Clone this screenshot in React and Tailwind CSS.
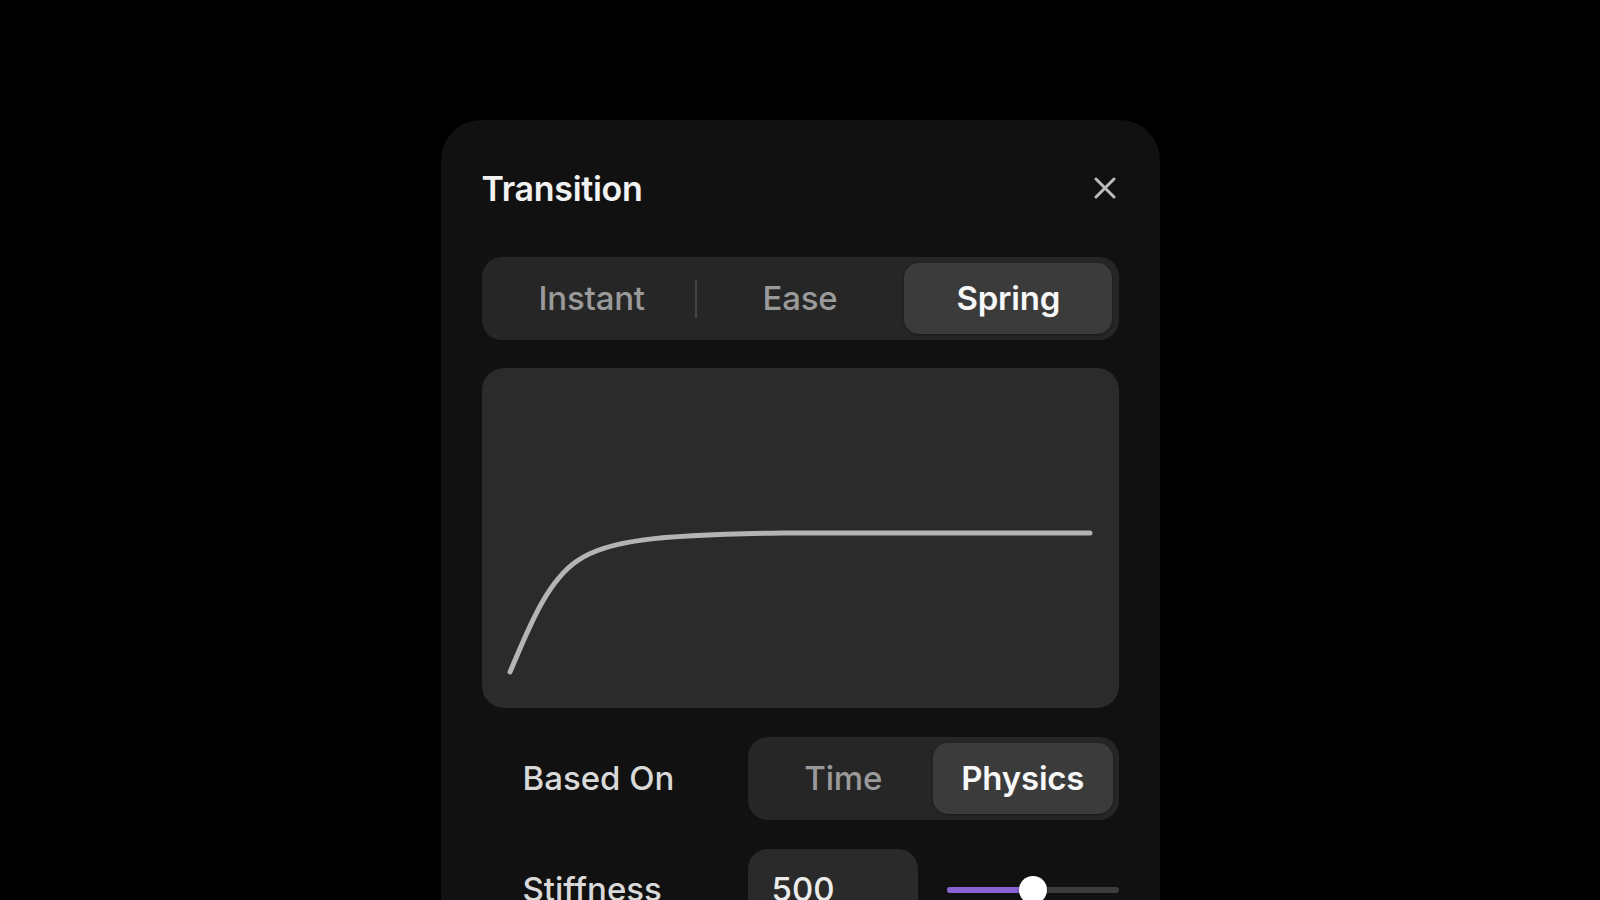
import React, { useState } from 'react';

const font = { fontFamily: 'Inter, "Noto Sans", sans-serif' };

function Segmented({ options, value, onChange, dividers = false, className = '' }) {
  return (
    <div className={`flex h-[83px] items-stretch rounded-[20px] bg-[#262626] p-[6px] ${className}`}>
      {options.map((opt, i) => {
        const active = opt === value;
        const prevActive = options[i - 1] === value;
        return (
          <React.Fragment key={opt}>
            {dividers && i > 0 && (
              <div className="flex w-0 shrink-0 items-center">
                <div
                  className={`h-[38px] w-[2px] shrink-0 -translate-x-[1px] ${
                    active || prevActive ? 'bg-transparent' : 'bg-[#444444]'
                  }`}
                />
              </div>
            )}
            <button
              type="button"
              onClick={() => onChange(opt)}
              className={`flex flex-1 items-center justify-center rounded-[15px] text-[33px] tracking-[-0.2px] ${
                active
                  ? 'bg-[#3b3b3b] font-semibold text-[#f7f7f7] shadow-[0_1px_3px_rgba(0,0,0,0.35)]'
                  : 'font-medium text-[#9a9a9a]'
              }`}
            >
              {opt}
            </button>
          </React.Fragment>
        );
      })}
    </div>
  );
}

function SpringCurve() {
  return (
    <div className="h-[340px] w-full rounded-[22px] bg-[#2b2b2b]">
      <svg width="636" height="340" viewBox="0 0 636 340" fill="none">
        <path
          d="M28 304 C45 265 63 215 95 193 C125 172 175 167 300 165 L608 165"
          stroke="#b4b4b4"
          strokeWidth="5"
          strokeLinecap="round"
          strokeLinejoin="round"
        />
      </svg>
    </div>
  );
}

export default function App() {
  const [mode, setMode] = useState('Spring');
  const [basis, setBasis] = useState('Physics');
  const stiffness = 500;
  const pct = 50;

  return (
    <div className="flex h-[900px] justify-center overflow-hidden bg-black pt-[120px]" style={font}>
      <div className="h-[880px] w-[719px] shrink-0 rounded-[40px] bg-[#111111] px-[41px] pt-[48px]">
        <div className="flex h-[40px] items-center justify-between">
          <h2 className="text-[34px] font-semibold tracking-[-0.3px] text-[#f2f2f2]">Transition</h2>
          <button type="button" className="mr-[3px] text-[#bcbcbc]">
            <svg width="22" height="22" viewBox="0 0 22 22" fill="none">
              <path d="M2 2 L20 20 M20 2 L2 20" stroke="currentColor" strokeWidth="3" strokeLinecap="round" />
            </svg>
          </button>
        </div>

        <Segmented
          className="mt-[49px]"
          options={['Instant', 'Ease', 'Spring']}
          value={mode}
          onChange={setMode}
          dividers
        />

        <div className="mt-[28px]">
          <SpringCurve />
        </div>

        <div className="mt-[29px] flex items-center">
          <div className="w-[266px] pl-[41px] text-[33px] font-medium text-[#d9d9d9]">Based On</div>
          <Segmented
            className="h-[81px] flex-1 p-[5px]"
            options={['Time', 'Physics']}
            value={basis}
            onChange={setBasis}
          />
        </div>

        <div className="mt-[29px] flex items-center">
          <div className="w-[266px] pl-[41px] text-[33px] font-medium text-[#d9d9d9]">Stiffness</div>
          <div className="flex h-[81px] w-[170px] items-center rounded-[20px] bg-[#2a2a2a] pl-[24px] text-[33px] font-medium text-[#ececec]">
            {stiffness}
          </div>
          <div className="relative ml-[29px] flex h-[28px] flex-1 items-center">
            <div className="h-[6px] w-full rounded-full bg-[#3c3c3c]">
              <div className="h-full rounded-full bg-[#8a63d4]" style={{ width: `${pct}%` }} />
            </div>
            <div
              className="absolute top-0 h-[28px] w-[28px] -translate-x-1/2 rounded-full bg-white shadow-[0_1px_3px_rgba(0,0,0,0.4)]"
              style={{ left: `${pct}%` }}
            />
          </div>
        </div>
      </div>
    </div>
  );
}
